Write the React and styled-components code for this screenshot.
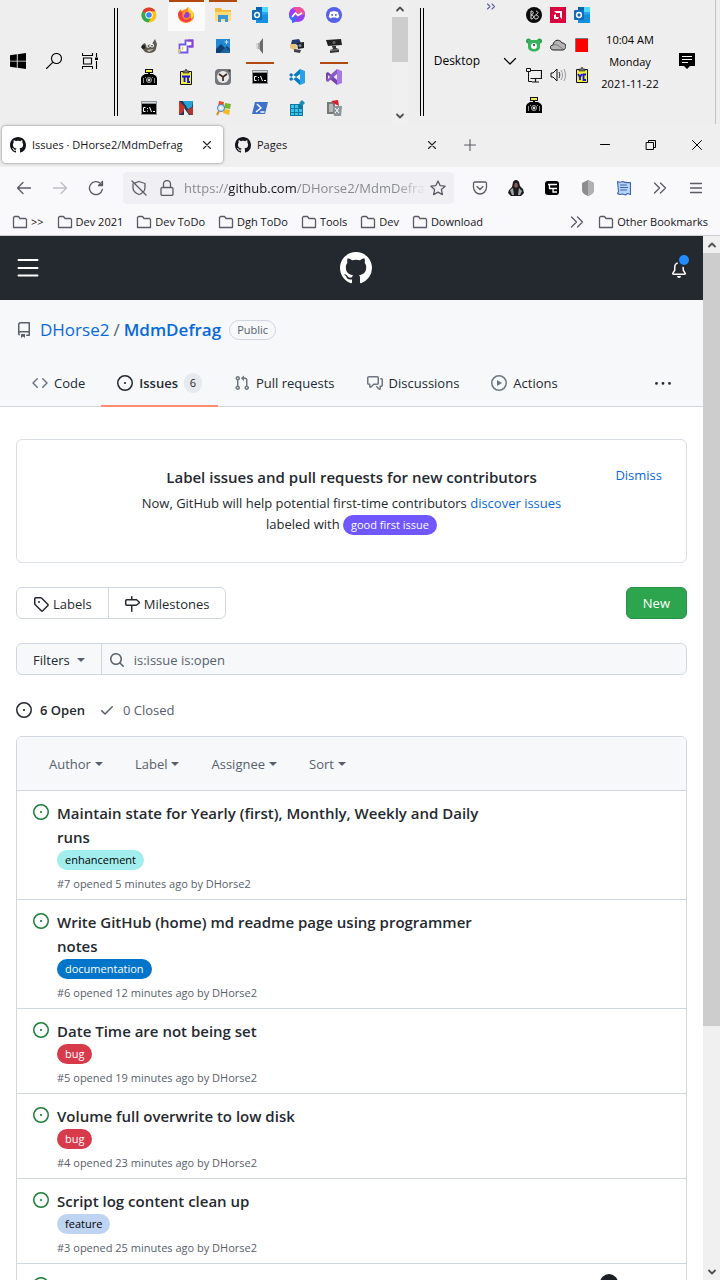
import React from "react";
import styled, { createGlobalStyle, css } from "styled-components";

const GlobalStyle = createGlobalStyle`
  * { box-sizing: border-box; }
  body { margin: 0; font-family: "Open Sans", "Noto Sans", sans-serif; font-size: 13px; line-height: 20px; color: #24292f; background: #fff; }
  button, input { font: inherit; color: inherit; }
  button { border: 0; padding: 0; background: none; cursor: pointer; }
  a { color: inherit; text-decoration: none; }
  h1, h2, h3, p, ul { margin: 0; padding: 0; font-weight: inherit; font-size: inherit; }
  ul { list-style: none; }
  svg { display: block; flex: none; }
`;

/* ---------- icons ---------- */

const octicons = {
  github: "M8 0C3.58 0 0 3.58 0 8c0 3.54 2.29 6.53 5.47 7.59.4.07.55-.17.55-.38 0-.19-.01-.82-.01-1.49-2.01.37-2.53-.49-2.69-.94-.09-.23-.48-.94-.82-1.13-.28-.15-.68-.52-.01-.53.63-.01 1.08.58 1.23.82.72 1.21 1.87.87 2.33.66.07-.52.28-.87.51-1.07-1.78-.2-3.64-.89-3.64-3.95 0-.87.31-1.59.82-2.15-.08-.2-.36-1.02.08-2.12 0 0 .67-.21 2.2.82.64-.18 1.32-.27 2-.27.68 0 1.36.09 2 .27 1.53-1.04 2.2-.82 2.2-.82.44 1.1.16 1.92.08 2.12.51.56.82 1.27.82 2.15 0 3.07-1.87 3.75-3.65 3.95.29.25.54.73.54 1.48 0 1.07-.01 1.93-.01 2.2 0 .21.15.46.55.38A8.013 8.013 0 0016 8c0-4.42-3.58-8-8-8z",
  issue: "M8 9.1a1.1 1.1 0 100-2.2 1.1 1.1 0 000 2.2zM8 0a8 8 0 100 16A8 8 0 008 0zM1.5 8a6.5 6.5 0 1113 0 6.5 6.5 0 01-13 0z",
  repo: "M2 2.5A2.5 2.5 0 014.5 0h8.75a.75.75 0 01.75.75v12.5a.75.75 0 01-.75.75h-2.5a.75.75 0 110-1.5h1.75v-2h-8a1 1 0 00-.714 1.7.75.75 0 01-1.072 1.05A2.495 2.495 0 012 11.5v-9zm10.5-1V9h-8c-.356 0-.694.074-1 .208V2.5a1 1 0 011-1h8zM5 12.25v3.25a.25.25 0 00.4.2l1.45-1.087a.25.25 0 01.3 0L8.6 15.7a.25.25 0 00.4-.2v-3.25a.25.25 0 00-.25-.25h-3.5a.25.25 0 00-.25.25z",
  code: "M4.72 3.22a.75.75 0 011.06 1.06L2.06 8l3.72 3.72a.75.75 0 11-1.06 1.06L.47 8.53a.75.75 0 010-1.06l4.25-4.25zm6.56 0a.75.75 0 10-1.06 1.06L13.94 8l-3.72 3.72a.75.75 0 101.06 1.06l4.25-4.25a.75.75 0 000-1.06l-4.25-4.25z",
  pull: "M7.177 3.073L9.573.677A.25.25 0 0110 .854v4.792a.25.25 0 01-.427.177L7.177 3.427a.25.25 0 010-.354zM3.75 2.5a.75.75 0 100 1.5.75.75 0 000-1.5zm-2.25.75a2.25 2.25 0 113 2.122v5.256a2.251 2.251 0 11-1.5 0V5.372A2.25 2.25 0 011.5 3.25zM11 2.5h-1V4h1a1 1 0 011 1v5.628a2.251 2.251 0 101.5 0V5A2.5 2.5 0 0011 2.5zm1 10.25a.75.75 0 111.5 0 .75.75 0 01-1.5 0zM3.75 12a.75.75 0 100 1.5.75.75 0 000-1.5z",
  discussion: "M1.5 2.75a.25.25 0 01.25-.25h8.5a.25.25 0 01.25.25v5.5a.25.25 0 01-.25.25h-3.5a.75.75 0 00-.53.22L3.5 11.44V9.25a.75.75 0 00-.75-.75h-1a.25.25 0 01-.25-.25v-5.5zM1.75 1A1.75 1.75 0 000 2.75v5.5C0 9.216.784 10 1.75 10H2v1.543a1.457 1.457 0 002.487 1.03L7.061 10h3.189A1.75 1.75 0 0012 8.25v-5.5A1.75 1.75 0 0010.25 1h-8.5zM14.5 4.75a.25.25 0 00-.25-.25h-.5a.75.75 0 110-1.5h.5c.966 0 1.75.784 1.75 1.75v5.5A1.75 1.75 0 0114.25 12H14v1.543a1.457 1.457 0 01-2.487 1.03L9.22 12.28a.75.75 0 111.06-1.06l2.22 2.22v-2.19a.75.75 0 01.75-.75h1a.25.25 0 00.25-.25v-5.5z",
  play: "M1.5 8a6.5 6.5 0 1113 0 6.5 6.5 0 01-13 0zM8 0a8 8 0 100 16A8 8 0 008 0zM6.379 5.227A.25.25 0 006 5.442v5.117a.25.25 0 00.379.214l4.264-2.559a.25.25 0 000-.428L6.379 5.227z",
  tag: "M2.5 7.775V2.75a.25.25 0 01.25-.25h5.025a.25.25 0 01.177.073l6.25 6.25a.25.25 0 010 .354l-5.025 5.025a.25.25 0 01-.354 0l-6.25-6.25a.25.25 0 01-.073-.177zm-1.5 0V2.75C1 1.784 1.784 1 2.75 1h5.025c.464 0 .91.184 1.238.513l6.25 6.25a1.75 1.75 0 010 2.474l-5.026 5.026a1.75 1.75 0 01-2.474 0l-6.25-6.25A1.75 1.75 0 011 7.775zM6 5a1 1 0 100 2 1 1 0 000-2z",
  milestone: "M7.75 0a.75.75 0 01.75.75V3h3.634c.414 0 .814.147 1.13.414l2.07 1.75a1.75 1.75 0 010 2.672l-2.07 1.75a1.75 1.75 0 01-1.13.414H8.5v5.25a.75.75 0 11-1.5 0V10H2.75A1.75 1.75 0 011 8.25v-3.5C1 3.784 1.784 3 2.75 3H7V.75A.75.75 0 017.75 0zm0 8.5h4.384a.25.25 0 00.161-.06l2.07-1.75a.25.25 0 000-.38l-2.07-1.75a.25.25 0 00-.161-.06H2.75a.25.25 0 00-.25.25v3.5c0 .138.112.25.25.25h5z",
  check: "M13.78 4.22a.75.75 0 010 1.06l-7.25 7.25a.75.75 0 01-1.06 0L2.22 9.28a.75.75 0 011.06-1.06L6 10.94l6.72-6.72a.75.75 0 011.06 0z",
  search: "M11.5 7a4.499 4.499 0 11-8.998 0A4.499 4.499 0 0111.5 7zm-.82 4.74a6 6 0 111.06-1.06l3.04 3.04a.75.75 0 11-1.06 1.06l-3.04-3.04z",
  bell: "M8 16a2 2 0 001.985-1.75c.017-.137-.097-.25-.235-.25h-3.5c-.138 0-.252.113-.235.25A2 2 0 008 16zM8 1.5A3.5 3.5 0 004.5 5v2.947c0 .346-.102.683-.294.97l-1.703 2.556a.018.018 0 00-.003.01l.001.006c0 .002.002.004.004.006a.017.017 0 00.006.004l.007.001h10.964l.007-.001a.016.016 0 00.006-.004.016.016 0 00.004-.006l.001-.007a.017.017 0 00-.003-.01l-1.703-2.554a1.75 1.75 0 01-.294-.97V5A3.5 3.5 0 008 1.5zM3 5a5 5 0 0110 0v2.947c0 .05.015.098.042.139l1.703 2.555A1.518 1.518 0 0113.482 13H2.518a1.518 1.518 0 01-1.263-2.36l1.703-2.554A.25.25 0 003 7.947V5z",
  more: "M2.5 8a1.4 1.4 0 100 2.8 1.4 1.4 0 000-2.8zM9 8a1.4 1.4 0 100 2.8A1.4 1.4 0 009 8zm6.5 0a1.4 1.4 0 100 2.8 1.4 1.4 0 000-2.8z",
};

function Oct({ name, size = 16, color = "currentColor" }) {
  return (
    <svg width={size} height={size} viewBox={name === "more" ? "0 0 18 18" : "0 0 16 16"} fill={color} fillRule="evenodd" aria-hidden="true">
      <path d={octicons[name]} />
    </svg>
  );
}

function Line({ d, size = 16, color = "#5b5b66", width = 1.3, fill = "none" }) {
  return (
    <svg width={size} height={size} viewBox="0 0 16 16" fill={fill} stroke={color} strokeWidth={width} strokeLinecap="round" strokeLinejoin="round" aria-hidden="true">
      <path d={d} />
    </svg>
  );
}

function Art({ children }) {
  return <svg width="16" height="16" viewBox="0 0 16 16" aria-hidden="true">{children}</svg>;
}

const camera = (
  <>
    <path d="M4 0h8v4H4z" fill="#111" />
    <path d="M5 1h6v2H5z" fill="#eded4c" />
    <path d="M7 4h2v2H7zM1 7l3-2h8l3 2 1 2v7H0V9z" fill="#000" />
    <path d="M2.5 9v5M4.500 8v1M13.500 9v5M11.500 8v1" stroke="#8d8d8d" />
    <circle cx="8" cy="11" r="2.6" fill="#333" stroke="#b5b5b5" strokeWidth=".8" />
    <circle cx="8" cy="11" r="1.2" fill="#ddd" />
  </>
);
const outlook = (
  <>
    <path d="M4 0h12v14H4z" fill="#28a8ea" />
    <path d="M10 0h6v5h-6z" fill="#50d9ff" />
    <path d="M4 0h6v5H4z" fill="#0a63b0" />
    <path d="M4 9l12-2v9H4z" fill="#1490df" />
    <rect y="3" width="10" height="10" rx="1" fill="#0f6cbd" />
    <circle cx="5" cy="8" r="2.4" fill="none" stroke="#fff" strokeWidth="1.5" />
  </>
);
const terminal = (
  <>
    <path d="M0 1h16v14H0z" fill="#8d9094" />
    <path d="M1 4h14v10H1z" fill="#000" />
    <path d="M1 2h14v1H1z" fill="#d5d8dc" />
    <path d="M4.5 7.500H2.500v4h2M6.500 8v1M6.500 10.500v1M8.500 7l2 5M12 11.500h2" stroke="#fff" fill="none" />
  </>
);
const clip = (letter) => (
  <>
    <path d="M2.500 2.500h11v13h-11z" fill="#f3ee3c" stroke="#111" />
    <path d="M5 4V2h2l1-2 1 2h2v2z" fill="#777" stroke="#111" strokeWidth=".6" />
    <path d={letter} stroke="#1414d4" strokeWidth="1.8" fill="none" />
  </>
);

const apps = {
  Chrome: (
    <>
      <circle cx="8" cy="8" r="7.5" fill="#fbc116" />
      <path d="M8 8L1.5 4.2A7.5 7.5 0 0 1 14.5 4.2H8z" fill="#e33b2e" />
      <path d="M8 8L1.5 4.2A7.5 7.5 0 0 0 7.3 15.5L11 9.5z" fill="#2da94f" />
      <circle cx="8" cy="8" r="3.7" fill="#fff" />
      <circle cx="8" cy="8" r="2.8" fill="#4285f4" />
    </>
  ),
  Firefox: (
    <>
      <path d="M1 5l1-3 2 2c1-1 3-2 4-2l2-2c1 2 5 4 6 7 1 5-3 9-8 9S0 12 0 8z" fill="#ff8a1f" />
      <path d="M1 4l3 1 2 1-2 3c1 4 5 5 8 2l3-2c-1 4-4 6-7 6s-8-3-8-8z" fill="#f5394a" />
      <path d="M10 0c1 2 6 4 6 9l-3 3V7l-3-3z" fill="#ffd93b" />
      <circle cx="8.500" cy="8" r="3" fill="#8b3fd9" />
      <path d="M4 6l4-2-1 3-2 2z" fill="#ff9a1f" />
    </>
  ),
  Explorer: (
    <>
      <path d="M0 1h6l1 2h9v11H0z" fill="#f2bd42" />
      <path d="M0 5h16v9H0z" fill="#ffdc7a" />
      <path d="M3 15V8h10v7h-3v-3H6v3z" fill="#3a97dc" />
    </>
  ),
  Outlook: outlook,
  Messenger: (
    <>
      <path d="M8 0c5 0 8 3 8 7.500S13 15 8 15l-2-.3L3 16v-2.500C1 12 0 10 0 7.500 0 3 3 0 8 0z" fill="#9a3df2" />
      <path d="M8 0c5 0 8 3 8 7.500L10 8 4 1C5 0 7 0 8 0z" fill="#ee5396" />
      <path d="M0 8l9 2-3 5-3 1v-2.500C1 12 0 10 0 8z" fill="#3b6bff" />
      <path d="M3 10l3.500-4 2.500 2.500L13 6" stroke="#fff" strokeWidth="1.7" fill="none" />
    </>
  ),
  Discord: (
    <>
      <circle cx="8" cy="8" r="8" fill="#5661ea" />
      <path d="M4 5c2-1 6-1 8 0l1.300 5-2.300 1.500-1-1H6l-1 1L2.700 10z" fill="#fff" />
      <circle cx="6.200" cy="8" r="1" fill="#5661ea" />
      <circle cx="9.800" cy="8" r="1" fill="#5661ea" />
    </>
  ),
  Gimp: (
    <>
      <path d="M2 6l2-1 1 2 6-1 3-5 2 5-1 5c-1 4-7 5-11 3L0 9z" fill="#5e5a52" />
      <circle cx="7" cy="8" r="1.8" fill="#fff" />
      <circle cx="11" cy="7.500" r="2" fill="#fff" />
      <circle cx="7.300" cy="8" r=".8" />
      <circle cx="11" cy="7.700" r=".8" />
      <circle cx="2.500" cy="9" r="2" fill="#222" />
      <path d="M6 12l7-1-5 3z" fill="#c9c3b6" />
    </>
  ),
  "Power Automate": (
    <>
      <path d="M1.500 6.500h6v-4h7v6h-5v6h-8z" fill="#fff" stroke="#7057e8" strokeWidth="1.8" />
      <path d="M10 2.500h4.500v6H11" fill="none" stroke="#8e3fd0" strokeWidth="1.8" />
      <path d="M1.500 15v-4M4.500 9v3" stroke="#ded338" strokeWidth="1.5" />
    </>
  ),
  Photos: (
    <>
      <path d="M1 1h14v14H1z" fill="#2387d3" />
      <path d="M1 11l5-5 4 4 2-2 3 3v4H1z" fill="#123f70" />
      <path d="M7 13l4-4 4 4v2H5z" fill="#1b63a3" />
      <path d="M11.500 2v4M9.500 4h4" stroke="#bfe4ff" />
    </>
  ),
  Sound: (
    <>
      <path d="M4 5h3l4-4v14l-4-4H4z" fill="#a5a5a5" />
      <path d="M8 4l3-4v16l-3-4z" fill="#6a6a6a" />
      <path d="M4 5h2v6H4z" fill="#d8d8d8" />
    </>
  ),
  Devices: (
    <>
      <path d="M3 2l7-1 2 4-5 2-5-1z" fill="#26396f" />
      <path d="M1 6h6l1 4-3 2-4-2z" fill="#e5c47c" />
      <path d="M8 5l7-1v6l-6 1z" fill="#222" />
      <circle cx="11" cy="7.500" r="1.500" fill="#7386ab" />
      <path d="M5 11l7 1-1 3-6-1z" fill="#444" />
    </>
  ),
  Webcam: (
    <>
      <path d="M0 2l15-1 1 6-14 1z" fill="#222" />
      <path d="M6 8h4v2l3 1v3l-9 1v-3l3-1z" fill="#333" />
      <circle cx="8" cy="4.500" r="1.500" fill="#666" />
      <path d="M4 12.500l9-1" stroke="#888" />
    </>
  ),
  Camera: camera,
  Pi: clip("M4 7.500h8M6.500 7.500V13M10 7.500V13h2"),
  Clock: (
    <>
      <rect width="16" height="16" rx="4" fill="#73777c" />
      <circle cx="8" cy="8" r="6" fill="#e8e8e8" />
      <path d="M4 5l4 3 4-3M8 8v4" stroke="#3d2920" strokeWidth="1.700" fill="none" />
      <circle cx="14.500" cy="1.500" r="1.200" fill="#333" />
    </>
  ),
  Terminal: terminal,
  "VS Code": (
    <>
      <path d="M11 0L0 10l2 2 9-7zM11 16L0 6l2-2 9 7z" fill="#087bc3" />
      <path d="M11 0l5 2v12l-5 2z" fill="#27a3ed" />
    </>
  ),
  "Visual Studio": (
    <>
      <path d="M0 4l2-1 9 8v5L2 8.500V11l-2 1z" fill="#7544ad" />
      <path d="M11 0v5l-9 8-2-1 2-4z" fill="#8a5bc7" />
      <path d="M11 0l5 2v12l-5 2z" fill="#a779e5" />
      <path d="M2 6v4l2-2z" fill="#eee" />
    </>
  ),
  Console: terminal,
  Netbeans: (
    <>
      <path d="M1 1h4l6 8V1h4v14h-4L6 8v7H1z" fill="#203b59" />
      <path d="M1 1l6 6-2 5-4 3z" fill="#c7362d" />
      <path d="M5 1h10l-1 6-4 2z" fill="#27a3d8" />
      <path d="M9 10l6-3v8l-4-1z" fill="#b5342e" />
    </>
  ),
  Windows: (
    <>
      <path d="M4 1l5 1-1 6-5-1z" fill="#ee4b24" />
      <path d="M10 3l6 1-1 5-6-1z" fill="#78b72d" />
      <path d="M9 9l6 1-1 5-6-2z" fill="#f4b925" />
      <circle cx="6" cy="8" r="3.500" fill="#dcecff" stroke="#377bc5" />
      <path d="M4 11l-2 4" stroke="#d28c2b" strokeWidth="2" />
    </>
  ),
  PowerShell: (
    <>
      <path d="M3 2h13l-3 12H0z" fill="#3c70c9" />
      <path d="M5 4l4 4-5 4M8.500 12h4" stroke="#fff" strokeWidth="1.400" fill="none" />
    </>
  ),
  Registry: (
    <>
      <path d="M1 4h13v12H1z" fill="#10779e" />
      <path d="M2 5h3v3H2zM6 5h3v3H6zM2 9h3v3H2zM6 9h3v3H6zM10 9h3v3h-3zM2 13h3v2H2zM6 13h3v2H6zM10 13h3v2h-3z" fill="#35c5ed" />
      <path d="M13 0l3 3-3 3-3-3z" fill="#1a8db8" />
    </>
  ),
  Cleaner: (
    <>
      <path d="M1 2h8v12H1z" fill="#777" />
      <path d="M3 4h4v8H3z" fill="#b7b7b7" />
      <path d="M5 1l7-1 1 6-4-2z" fill="#d61e2c" />
      <path d="M7 6h9l-1 10H8z" fill="#8a969c" />
      <path d="M9 8l4 5M13 8l-4 5" stroke="#fff" />
    </>
  ),
};
const runningApps = ["Firefox", "Explorer", "Terminal", "Visual Studio"];

const tray = {
  BO: (
    <>
      <circle cx="8" cy="8" r="8" fill="#0b0b0b" />
      <path d="M5 4v8M5 4c3 0 3 3 0 4 4 0 3 4 0 4M10 4c3 1 2 3 0 3.500M10 8c3 0 3 4 0 4s-2-4 0-4" stroke="#ddd" fill="none" />
    </>
  ),
  AMD: (
    <>
      <path d="M0 0h16v16H0z" fill="#d9043d" />
      <path d="M4 4h8v8l-2-2V6H6zM4 8l2-1v3h3l-1 2H4z" fill="#fff" />
    </>
  ),
  Mail: outlook,
  Bear: (
    <>
      <circle cx="2.500" cy="4" r="2.500" fill="#2f9e4f" />
      <circle cx="13.500" cy="4" r="2.500" fill="#2f9e4f" />
      <path d="M2 3h12v7c0 6-12 6-12 0z" fill="#38b25b" />
      <circle cx="8" cy="9" r="3" fill="#fff" />
      <circle cx="8" cy="8" r="1" fill="#222" />
    </>
  ),
  OneDrive: (
    <>
      <path d="M3 13c-4-1-3-5 0-5 1-6 7-6 9-2 5 0 5 6 1 7z" fill="#b5b5b5" stroke="#222" />
      <path d="M3 8c3-1 5 0 10 4" stroke="#777" fill="none" />
    </>
  ),
  Monitor: (
    <>
      <path d="M2 1h12v14H2z" fill="#f00" />
      <path d="M1.500 15V1.500H14" stroke="#777" fill="none" />
    </>
  ),
  Network: (
    <>
      <path d="M5 3.500h10.500v8H4.500M9.500 12v3M6 15h7" stroke="#111" strokeWidth="1.200" fill="none" />
      <path d="M.5 1.500h4v3h-4zM2.500 5v9.500H6" stroke="#111" fill="none" />
    </>
  ),
  Volume: (
    <>
      <path d="M1 6h2l4-4v12L3 10H1z" stroke="#111" fill="none" />
      <path d="M9 5c1 2 1 4 0 6" stroke="#222" fill="none" />
      <path d="M11 3c2 3 2 7 0 10M14 2c2 4 2 8 0 12" stroke="#999" fill="none" />
    </>
  ),
  Clipboard: clip("M4 7l2 3v3M8 7l-2 3M12 7.500H9.500V13H12"),
  Capture: camera,
};

/* ---------- window shell ---------- */

const Screen = styled.div`
  height: 100vh;
  display: flex;
  flex-direction: column;
  overflow: hidden;
`;

/* ---------- taskbar ---------- */

const Taskbar = styled.header`
  height: 124px;
  flex: none;
  display: flex;
  background: #eee;
  color: #000;
  padding-right: 4px;
`;
const StartGroup = styled.div`
  display: flex;
  align-items: center;
  gap: 20px;
  padding: 0 16px 2px 10px;
`;
const Grip = styled.span`
  width: 4px;
  margin: 8px 0 8px ${(p) => p.$before || 0}px;
  border: solid #000;
  border-width: 0 1px;
`;
const AppGrid = styled.nav`
  display: grid;
  grid-template-columns: repeat(6, 37px);
  grid-template-rows: repeat(4, 31px);
  padding-left: 13px;
  flex: 1;
`;
const AppButton = styled.button`
  display: grid;
  place-items: center;
  position: relative;
  padding: 0 2px 1px 0;
  background: ${(p) => (p.$active ? "#fafafa" : "none")};
  ${(p) => p.$running && css`
    &::before {
      content: "";
      position: absolute;
      top: 0;
      left: ${p.$active ? 1 : 4}px;
      right: ${p.$active ? 1 : 5}px;
      height: 2px;
      background: #b04a10;
    }
  `}
`;
const ScrollTrack = styled.div`
  width: ${(p) => p.$w}px;
  flex: none;
  display: flex;
  flex-direction: column;
  align-items: center;
  background: #f0f0f0;
`;
const ScrollButton = styled.button`
  height: 17px;
  width: 100%;
  display: grid;
  place-items: center;
  flex: none;
`;
const Thumb = styled.div`
  width: 100%;
  flex: ${(p) => p.$grow} 0 0;
  background: #cdcdcd;
`;
const Rest = styled.div`
  flex: ${(p) => p.$grow} 0 0;
`;
const DesktopBar = styled.div`
  display: flex;
  align-items: center;
  position: relative;
  padding: 0 4px 2px 10px;
  gap: 22px;
  font-size: 12px;
`;
const Overflow = styled.button`
  position: absolute;
  top: 1px;
  right: 23px;
  display: flex;
`;
const Tray = styled.div`
  display: grid;
  grid-template-columns: repeat(3, 24px);
  grid-template-rows: repeat(4, 30px);
`;
const TrayButton = styled.button`
  display: grid;
  place-items: center;
`;
const Clock = styled.time`
  width: 72px;
  display: flex;
  flex-direction: column;
  justify-content: center;
  text-align: center;
  font-size: 11px;
  line-height: 22px;
  white-space: nowrap;
`;
const NoticeButton = styled.button`
  width: 41px;
  display: grid;
  place-items: center;
  padding-bottom: 2px;
`;
const TaskEdge = styled.div`
  width: 9px;
  border-right: 1px solid #c4c4c4;
`;

/* ---------- browser chrome ---------- */

const TabStrip = styled.div`
  height: 43px;
  flex: none;
  display: flex;
  align-items: center;
  gap: 4px;
  background: #efeff0;
  padding: 0 0 2px 2px;
  color: #15141a;
  font-size: 11px;
`;
const Tab = styled.div`
  display: flex;
  align-items: center;
  gap: 6px;
  height: 37px;
  width: 221px;
  padding: 0 8px;
  border-radius: 4px;
  ${(p) => p.$active && css`
    background: #fff;
    box-shadow: 0 0 3px rgba(0, 0, 0, 0.5);
  `}
`;
const TabTitle = styled.span`
  flex: 1;
  white-space: nowrap;
`;
const IconButton = styled.button`
  display: grid;
  place-items: center;
  width: ${(p) => p.$w || 16}px;
  height: ${(p) => p.$h || 32}px;
  flex: none;
`;
const WindowButtons = styled.div`
  display: flex;
  margin-left: auto;
`;
const NavBar = styled.div`
  height: 41px;
  flex: none;
  display: flex;
  align-items: center;
  background: #f9f9fb;
  padding: 0 6px;
`;
const UrlBox = styled.div`
  flex: 1;
  min-width: 0;
  height: 32px;
  display: flex;
  align-items: center;
  gap: 12px;
  padding: 0 8px;
  margin: 0 8px 0 9px;
  background: #f0f0f4;
  border-radius: 4px;
`;
const Url = styled.span`
  flex: 1;
  min-width: 0;
  overflow: hidden;
  white-space: nowrap;
  font-size: 13px;
  color: #8a8a92;
  margin: 0 -8px 0 -3px;
  mask-image: linear-gradient(to left, transparent, #000 30px);
  b { font-weight: 400; color: #15141a; }
`;
const Bookmarks = styled.nav`
  height: 28px;
  flex: none;
  display: flex;
  align-items: center;
  gap: 13px;
  background: #f9f9fb;
  border-bottom: 1px solid #ccccd0;
  padding: 0 12px;
  color: #15141a;
  font-size: 11px;
  white-space: nowrap;
`;
const Bookmark = styled.a`
  display: flex;
  align-items: center;
  gap: 3px;
`;
const BookmarkEnd = styled.div`
  display: flex;
  align-items: center;
  gap: 13px;
  margin-left: auto;
`;

/* ---------- page ---------- */

const Viewport = styled.div`
  flex: 1;
  min-height: 0;
  display: flex;
`;
const Page = styled.main`
  flex: 1;
  min-width: 0;
  overflow: hidden;
`;
const SiteHeader = styled.header`
  display: flex;
  align-items: center;
  justify-content: space-between;
  height: 64px;
  padding: 0 16px;
  background: #24292f;
  color: #fff;
`;
const Bell = styled.button`
  position: relative;
  padding: 4px 0 0;
  &::after {
    content: "";
    position: absolute;
    top: -3px;
    right: -2px;
    width: 10px;
    height: 10px;
    border-radius: 50%;
    background: #218bff;
    box-shadow: 0 0 0 2px #24292f;
  }
`;
const RepoHead = styled.section`
  background: #f6f8fa;
  border-bottom: 1px solid #d0d7de;
  padding: 15px 16px 0;
`;
const RepoTitle = styled.h1`
  display: flex;
  align-items: center;
  font-size: 17px;
  line-height: 30px;
  color: #57606a;
  svg { margin-right: 8px; }
  a { color: #0969da; }
  a:last-of-type { font-weight: 600; }
`;
const Slash = styled.span`
  margin: 0 4px;
`;
const Visibility = styled.span`
  margin-left: 8px;
  padding: 0 7px;
  border: 1px solid #d0d7de;
  border-radius: 20px;
  font-size: 11px;
  line-height: 18px;
`;
const RepoNav = styled.nav`
  display: flex;
  margin: 13px 0 -1px;
`;
const RepoTab = styled.a`
  display: flex;
  align-items: center;
  gap: 6px;
  height: 49px;
  padding: 2px 16px 0;
  white-space: nowrap;
  font-weight: ${(p) => (p.$active ? 600 : 400)};
  border-bottom: 2px solid ${(p) => (p.$active ? "#fd8c73" : "transparent")};
  svg { color: ${(p) => (p.$active ? "#24292f" : "#6e7781")}; }
`;
const Count = styled.span`
  min-width: 18px;
  border-radius: 10px;
  background: #e6e9ee;
  text-align: center;
  font-size: 11px;
  font-weight: 400;
`;
const MoreButton = styled.button`
  margin-left: auto;
  padding: 0 15px;
`;
const Content = styled.div`
  padding: 32px 16px 0;
`;
const Notice = styled.section`
  display: grid;
  grid-template-columns: 1fr minmax(0, 440px) 1fr;
  border: 1px solid #d8dee4;
  border-radius: 6px;
  padding: 25px 24px 27px;
  text-align: center;
  line-height: 21px;
`;
const NoticeText = styled.div`
  grid-column: 2;
  h2 { font-size: 15px; font-weight: 600; line-height: 24px; margin-bottom: 4px; }
  a { color: #0969da; }
`;
const Dismiss = styled.button`
  justify-self: end;
  align-self: start;
  color: #0969da;
`;
const Pill = styled.span`
  display: inline-block;
  padding: 0 8px;
  border-radius: 10px;
  line-height: 20px;
  font-size: 11px;
  background: ${(p) => p.$bg};
  color: ${(p) => p.$fg};
`;
const Actions = styled.div`
  display: flex;
  justify-content: space-between;
  margin-top: 24px;
`;
const Group = styled.div`
  display: flex;
  border: 1px solid #d0d7de;
  border-radius: 6px;
`;
const GroupLink = styled.a`
  display: flex;
  align-items: center;
  gap: 4px;
  height: 30px;
  padding: 2px 16px 0;
  & + & { border-left: 1px solid #d0d7de; padding-left: 15px; }
`;
const NewButton = styled.button`
  height: 32px;
  padding: 0 16px;
  border: 1px solid #2a9147;
  border-radius: 6px;
  background: #2da44e;
  color: #fff;
`;
const FilterBar = styled.div`
  display: flex;
  height: 32px;
  margin-top: 24px;
  border: 1px solid #d0d7de;
  border-radius: 6px;
  background: #f6f8fa;
`;
const FilterButton = styled.button`
  display: flex;
  align-items: center;
  gap: 7px;
  padding: 2px 16px 0;
  border-right: 1px solid #d0d7de;
`;
const Caret = styled.span`
  border: 4px solid transparent;
  border-top-color: #57606a;
  border-bottom-width: 0;
`;
const SearchField = styled.label`
  flex: 1;
  display: flex;
  align-items: center;
  gap: 9px;
  padding: 2px 7px 0;
  color: #57606a;
  input { flex: 1; min-width: 0; border: 0; outline: 0; background: none; padding: 0; }
`;
const States = styled.div`
  display: flex;
  gap: 14px;
  margin: 25px 0 16px;
  color: #57606a;
`;
const StateLink = styled.a`
  display: flex;
  align-items: center;
  gap: 8px;
  ${(p) => p.$active && css`
    color: #24292f;
    font-weight: 600;
  `}
`;
const IssueBox = styled.section`
  border: 1px solid #d0d7de;
  border-radius: 6px;
  overflow: hidden;
`;
const IssueHead = styled.div`
  display: flex;
  gap: 32px;
  height: 53px;
  padding: 1px 32px 0;
  background: #f6f8fa;
  color: #57606a;
`;
const SortButton = styled.button`
  display: flex;
  align-items: center;
  gap: 4px;
`;
const Issue = styled.li`
  display: flex;
  gap: 8px;
  padding: 10px 16px 6px;
  border-top: 1px solid #d0d7de;
`;
const IssueIcon = styled.span`
  padding-top: 3px;
  color: #1a7f37;
`;
const IssueBody = styled.div`
  width: 68%;
  display: flex;
  flex-direction: column;
  align-items: flex-start;
`;
const IssueTitle = styled.h3`
  margin-bottom: 1px;
  font-size: 15px;
  font-weight: 600;
  line-height: 24px;
`;
const Meta = styled.p`
  margin-top: 5px;
  font-size: 11px;
  line-height: 18px;
  color: #57606a;
`;
const Avatar = styled.span`
  width: 18px;
  height: 18px;
  margin-left: 102px;
  border-radius: 50%;
  background: #1b1f23;
`;

const folder = "M1.5 13.5v-10l1-1h4l1.5 2h5.5l1 1v8z";
const bookmarks = [">>", "Dev 2021", "Dev ToDo", "Dgh ToDo", "Tools", "Dev", "Download"];
const issues = [
  { n: 7, t: "Maintain state for Yearly (first), Monthly, Weekly and Daily runs", l: "enhancement", bg: "#a2eeef", fg: "#000", m: 5 },
  { n: 6, t: "Write GitHub (home) md readme page using programmer notes", l: "documentation", bg: "#0075ca", fg: "#fff", m: 12 },
  { n: 5, t: "Date Time are not being set", l: "bug", bg: "#d73a4a", fg: "#fff", m: 19 },
  { n: 4, t: "Volume full overwrite to low disk", l: "bug", bg: "#d73a4a", fg: "#fff", m: 23 },
  { n: 3, t: "Script log content clean up", l: "feature", bg: "#bfd4f2", fg: "#000", m: 25 },
];
const UP = "M5 9.500l3-3 3 3";
const DOWN = "M5 6.500l3 3 3-3";
const CROSS = "M4.500 4.500l7 7M11.500 4.500l-7 7";
const CHEVRONS = "M2.500 3l5 5-5 5M8.500 3l5 5-5 5";

function WindowsTaskbar() {
  return (
    <Taskbar>
      <StartGroup>
        <IconButton aria-label="Start">
          <Art><path d="M0 2.300l6.800-1v6.400H0zM7.700 1.200L16 0v7.700H7.700zM0 8.500h6.800v6.300L0 13.800zM7.700 8.500H16V16l-8.300-1.200z" /></Art>
        </IconButton>
        <IconButton aria-label="Search"><Line color="#000" width={1.1} d="M15.500 5.500a5 5 0 1 1-10 0 5 5 0 0 1 10 0M7 9.200L.5 15.500" /></IconButton>
        <IconButton aria-label="Task view">
          <Art>
            <path d="M.5 0v2.500h10V0M.5 16v-2.500h10V16M1.500 5h8v6h-8zM14.500 0v4M14.500 8v8" fill="none" stroke="#000" strokeWidth="1.1" />
            <path d="M13 4.500h3v2.500h-3z" />
          </Art>
        </IconButton>
      </StartGroup>
      <Grip />
      <AppGrid aria-label="Applications">
        {Object.entries(apps).map(([name, art]) => (
          <AppButton key={name} aria-label={name} $active={name === "Firefox"} $running={runningApps.includes(name)}>
            <Art>{art}</Art>
          </AppButton>
        ))}
      </AppGrid>
      <ScrollTrack $w={16}>
        <ScrollButton aria-label="Scroll applications up"><Line d={UP} color="#505050" width={1.8} /></ScrollButton>
        <Thumb $grow={1} />
        <Rest $grow={1} />
        <ScrollButton aria-label="Scroll applications down"><Line d={DOWN} color="#505050" width={1.8} /></ScrollButton>
      </ScrollTrack>
      <Grip $before={12} />
      <DesktopBar>
        <span>Desktop</span>
        <IconButton aria-label="Desktop items"><Line d="M2.500 5.500L8 11l5.500-5.500" color="#000" width={1.2} /></IconButton>
        <Overflow aria-label="More desktop items"><Line d="M4.500 3L7 5.500 4.500 8M9 3l2.500 2.500L9 8" color="#5f5f9c" width={1.1} /></Overflow>
      </DesktopBar>
      <Tray>
        {Object.entries(tray).map(([name, art]) => (
          <TrayButton key={name} aria-label={name}><Art>{art}</Art></TrayButton>
        ))}
      </Tray>
      <Clock dateTime="2021-11-22T10:04"><span>10:04 AM</span><span>Monday</span><span>2021-11-22</span></Clock>
      <NoticeButton aria-label="Notifications">
        <Art>
          <path d="M0 0h16v13h-5l-3 3-3-3H0z" />
          <path d="M3 3.500h10M3 6.500h10M3 9.500h6" stroke="#fff" />
        </Art>
      </NoticeButton>
      <TaskEdge />
    </Taskbar>
  );
}

function Browser() {
  return (
    <>
      <TabStrip>
        <Tab $active>
          <Oct name="github" /><TabTitle>Issues · DHorse2/MdmDefrag</TabTitle>
          <IconButton aria-label="Close Issues tab"><Line d={CROSS} color="#222" width={1.1} /></IconButton>
        </Tab>
        <Tab>
          <Oct name="github" /><TabTitle>Pages</TabTitle>
          <IconButton aria-label="Close Pages tab"><Line d={CROSS} color="#222" width={1.1} /></IconButton>
        </Tab>
        <IconButton aria-label="New tab" $w={36}><Line d="M8 2.500v11M2.500 8h11" width={1.1} /></IconButton>
        <WindowButtons>
          <IconButton aria-label="Minimize" $w={46}><Line d="M3.5 7.5h9" color="#000" width={1} /></IconButton>
          <IconButton aria-label="Restore" $w={46}><Line d="M3.5 5.5h7v7h-7zM5.5 5.5v-2h7v7h-2" color="#000" width={1} /></IconButton>
          <IconButton aria-label="Close window" $w={46}><Line d="M3.5 3.5l9 9M12.5 3.5l-9 9" color="#000" width={1} /></IconButton>
        </WindowButtons>
      </TabStrip>
      <NavBar>
        <IconButton aria-label="Back" $w={36}><Line d="M14.5 8H1.500M7 2.500L1.500 8 7 13.500" /></IconButton>
        <IconButton aria-label="Forward" $w={36}><Line d="M1.500 8h13M9 2.500L14.500 8 9 13.500" color="#bdbdc3" /></IconButton>
        <IconButton aria-label="Reload" $w={36}><Line d="M14.300 9.500A6.500 6.500 0 1 1 12.500 3.500l1.800 2M14.500 1.500v4h-4z" /></IconButton>
        <UrlBox>
          <Line d="M4 2.800L8 1.500l6 2v4c0 2-.7 3.500-1.700 4.700M2 4v3.500c0 4 3 6 6 7 1-.3 2-.8 3-1.600M1 1l14 14" />
          <Line d="M3 7.500h10l1 1v6l-1 1H3l-1-1v-6zM4.500 7.500V4a3.500 3.500 0 0 1 7 0v3.500" />
          <Url>https://<b>github.com</b>/DHorse2/MdmDefrag/issues</Url>
          <IconButton aria-label="Bookmark this page"><Line d="M8 1l2.100 4.600 5 .6-3.700 3.400 1 5L8 12.100l-4.400 2.500 1-5L.9 6.200l5-.6z" /></IconButton>
        </UrlBox>
        <IconButton aria-label="Pocket" $w={36}><Line d="M2.500 2h11l1 1v4c0 4-3 7-6.500 7s-6.500-3-6.500-7V3zM5 6.500l3 3 3-3" /></IconButton>
        <IconButton aria-label="Account" $w={36}>
          <Art>
            <path d="M5 2c2-3 5-2 6 0l1 4 3 3 1 4-3 3H3l-3-3 1-3 3-3z" fill="#1c1c20" />
            <path d="M7 3h2l1 3-2 2-2-2z" fill="#8a5f50" />
            <path d="M2 10l3-2 1 7H4zM11 8l3 3-2 4h-2z" fill="#a3a6ab" />
          </Art>
        </IconButton>
        <IconButton aria-label="Notes" $w={36}>
          <Art>
            <rect x="1" y="1" width="14" height="14" rx="3" />
            <path d="M4 4.500h9M5.500 4.500v4h7.500M9 8.500v3.500h4" stroke="#fff" strokeWidth="1.3" fill="none" />
          </Art>
        </IconButton>
        <IconButton aria-label="Shield" $w={36}>
          <Art>
            <path d="M8 0l6 3v7c0 3-3 5-6 6-3-1-6-3-6-6V3z" fill="#8d8d8d" />
            <path d="M8 0l6 3v7c0 3-3 5-6 6z" fill="#b0b0b0" />
          </Art>
        </IconButton>
        <IconButton aria-label="Reader" $w={36}><Line d="M1.500 1.500c2 1 3.500 1 5 0 2 1 4 1.500 8 1v12l-3-1-2 1.500-3-1-3 .5-2-1 1-2z M4.500 5h6M4.500 7.500h7M4.500 10h6" color="#3a66ad" fill="#b9d3f7" width={1.1} /></IconButton>
        <IconButton aria-label="More tools" $w={36}><Line d={CHEVRONS} /></IconButton>
        <IconButton aria-label="Menu" $w={36}><Line d="M2.500 3.500h11M2.500 8h11M2.500 12.500h11" /></IconButton>
      </NavBar>
      <Bookmarks aria-label="Bookmarks">
        {bookmarks.map((name) => (
          <Bookmark key={name} href="#bookmark"><Line d={folder} />{name}</Bookmark>
        ))}
        <BookmarkEnd>
          <IconButton aria-label="More bookmarks" $h={20}><Line d={CHEVRONS} /></IconButton>
          <Bookmark href="#other"><Line d={folder} />Other Bookmarks</Bookmark>
        </BookmarkEnd>
      </Bookmarks>
    </>
  );
}

export default function App() {
  return (
    <Screen>
      <GlobalStyle />
      <WindowsTaskbar />
      <Browser />
      <Viewport>
        <Page>
          <SiteHeader>
            <IconButton aria-label="Open menu" $w={24}>
              <svg width="24" height="24" viewBox="0 0 24 24" stroke="#fff" strokeWidth="2" strokeLinecap="round"><path d="M2.5 4h19M2.5 12h19M2.5 19.500h19" /></svg>
            </IconButton>
            <a href="#home" aria-label="GitHub"><Oct name="github" size={32} /></a>
            <Bell aria-label="Notifications"><Oct name="bell" /></Bell>
          </SiteHeader>
          <RepoHead>
            <RepoTitle>
              <Oct name="repo" /><a href="#owner">DHorse2</a><Slash>/</Slash><a href="#repo">MdmDefrag</a><Visibility>Public</Visibility>
            </RepoTitle>
            <RepoNav>
              <RepoTab href="#code"><Oct name="code" />Code</RepoTab>
              <RepoTab href="#issues" $active><Oct name="issue" />Issues<Count>6</Count></RepoTab>
              <RepoTab href="#pulls"><Oct name="pull" />Pull requests</RepoTab>
              <RepoTab href="#discussions"><Oct name="discussion" />Discussions</RepoTab>
              <RepoTab href="#actions"><Oct name="play" />Actions</RepoTab>
              <MoreButton aria-label="More"><Oct name="more" size={18} /></MoreButton>
            </RepoNav>
          </RepoHead>
          <Content>
            <Notice>
              <NoticeText>
                <h2>Label issues and pull requests for new contributors</h2>
                <p>Now, GitHub will help potential first-time contributors <a href="#discover">discover issues</a> labeled with <Pill $bg="#7057ff" $fg="#fff">good first issue</Pill></p>
              </NoticeText>
              <Dismiss>Dismiss</Dismiss>
            </Notice>
            <Actions>
              <Group>
                <GroupLink href="#labels"><Oct name="tag" />Labels</GroupLink>
                <GroupLink href="#milestones"><Oct name="milestone" />Milestones</GroupLink>
              </Group>
              <NewButton>New</NewButton>
            </Actions>
            <FilterBar>
              <FilterButton>Filters<Caret /></FilterButton>
              <SearchField><Oct name="search" /><input aria-label="Search issues" defaultValue="is:issue is:open" /></SearchField>
            </FilterBar>
            <States>
              <StateLink href="#open" $active><Oct name="issue" />6 Open</StateLink>
              <StateLink href="#closed"><Oct name="check" />0 Closed</StateLink>
            </States>
            <IssueBox>
              <IssueHead>
                {["Author", "Label", "Assignee", "Sort"].map((s) => <SortButton key={s}>{s}<Caret /></SortButton>)}
              </IssueHead>
              <ul>
                {issues.map((i) => (
                  <Issue key={i.n}>
                    <IssueIcon><Oct name="issue" /></IssueIcon>
                    <IssueBody>
                      <IssueTitle><a href={"#" + i.n}>{i.t}</a></IssueTitle>
                      <Pill $bg={i.bg} $fg={i.fg}>{i.l}</Pill>
                      <Meta>#{i.n} opened {i.m} minutes ago by DHorse2</Meta>
                    </IssueBody>
                  </Issue>
                ))}
                <Issue>
                  <IssueIcon><Oct name="issue" /></IssueIcon>
                  <IssueBody><IssueTitle><a href="#2">Make module load</a></IssueTitle></IssueBody>
                  <Avatar />
                </Issue>
              </ul>
            </IssueBox>
          </Content>
        </Page>
        <ScrollTrack $w={17}>
          <ScrollButton aria-label="Scroll up"><Line d={UP} color="#505050" width={1.8} /></ScrollButton>
          <Thumb $grow={153} />
          <Rest $grow={47} />
          <ScrollButton aria-label="Scroll down"><Line d={DOWN} color="#505050" width={1.8} /></ScrollButton>
        </ScrollTrack>
      </Viewport>
    </Screen>
  );
}
